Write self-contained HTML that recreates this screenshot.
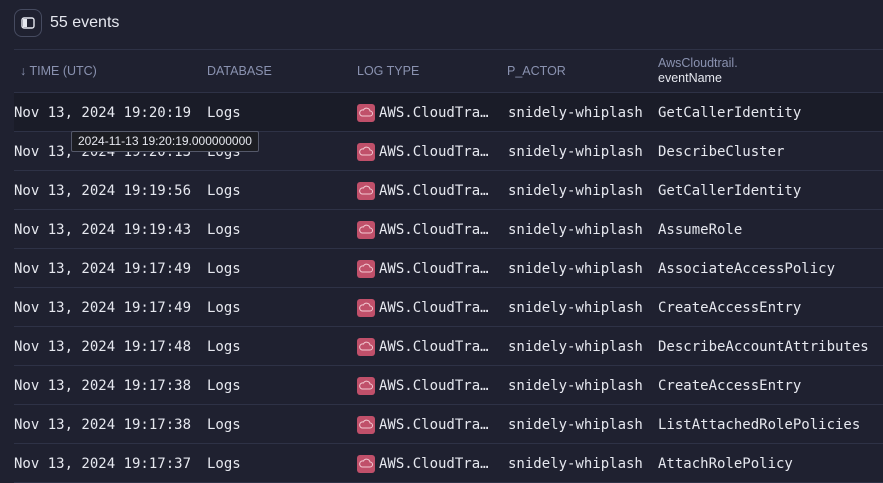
<!DOCTYPE html>
<html><head><style>
body{margin:0;width:883px;height:482px;background:#1f2130;overflow:hidden;font-family:"Liberation Sans",sans-serif;color:#e6e8ef;position:relative}
.btn{position:absolute;left:14px;top:9px;width:28px;height:28px;border:1px solid #464b60;border-radius:8px;box-sizing:border-box}
.btn svg{position:absolute;left:6px;top:6px}
.title{position:absolute;left:50px;top:14px;font-size:16px;color:#e6e8ef}
.hl{position:absolute;left:14px;right:0;height:1px;background:#2e3246}
.hd{position:absolute;top:64px;font-size:12.5px;color:#8a92b0}
.row{position:absolute;left:14px;right:0;height:38px;border-bottom:1px solid #2e3246;font-family:"DejaVu Sans Mono",monospace;font-size:14px;color:#e6e8ef}
.row span{position:absolute;top:12px;white-space:nowrap}
.ic{position:absolute;left:343px;top:11px;width:18px;height:18px;background:#c0506a;border-radius:3px}
.ic svg{position:absolute;left:2px;top:3px}
.tip{position:absolute;left:71px;top:131px;height:19px;padding:0 6px;background:#1c1d22;border:1px solid #55596a;border-radius:2px;font-size:12px;line-height:19px;color:#e6e8ef}
</style></head><body>
<div class="btn"><svg width="14" height="14" viewBox="0 0 14 14"><rect x="1" y="2" width="12" height="10" rx="2" fill="none" stroke="#e6e8ef" stroke-width="1.4"/><rect x="2" y="3" width="4" height="8" fill="#e6e8ef"/></svg></div>
<div class="title">55 events</div>
<div class="hl" style="top:49px"></div>
<div class="hd" style="left:20px">↓ TIME (UTC)</div>
<div class="hd" style="left:207px">DATABASE</div>
<div class="hd" style="left:357px">LOG TYPE</div>
<div class="hd" style="left:507px">P_ACTOR</div>
<div class="hd" style="left:658px;top:56px;line-height:15px">AwsCloudtrail.<br><span style="color:#e6e8ef">eventName</span></div>
<div class="hl" style="top:92px"></div>
<div class="row" style="top:93px;background:#1a1c28"><span style="left:0">Nov 13, 2024 19:20:19</span><span style="left:193px">Logs</span><div class="ic"><svg width="14" height="11" viewBox="0 0 14 11"><path d="M3 9h8a2.5 2.5 0 0 0 0-5 3.5 3.5 0 0 0-6.5-1A3 3 0 0 0 3 9z" fill="none" stroke="#f3c9d2" stroke-width="1"/></svg></div><span style="left:365px">AWS.CloudTra…</span><span style="left:494px">snidely-whiplash</span><span style="left:644px">GetCallerIdentity</span></div>
<div class="row" style="top:132px"><span style="left:0">Nov 13, 2024 19:20:13</span><span style="left:193px">Logs</span><div class="ic"><svg width="14" height="11" viewBox="0 0 14 11"><path d="M3 9h8a2.5 2.5 0 0 0 0-5 3.5 3.5 0 0 0-6.5-1A3 3 0 0 0 3 9z" fill="none" stroke="#f3c9d2" stroke-width="1"/></svg></div><span style="left:365px">AWS.CloudTra…</span><span style="left:494px">snidely-whiplash</span><span style="left:644px">DescribeCluster</span></div>
<div class="row" style="top:171px"><span style="left:0">Nov 13, 2024 19:19:56</span><span style="left:193px">Logs</span><div class="ic"><svg width="14" height="11" viewBox="0 0 14 11"><path d="M3 9h8a2.5 2.5 0 0 0 0-5 3.5 3.5 0 0 0-6.5-1A3 3 0 0 0 3 9z" fill="none" stroke="#f3c9d2" stroke-width="1"/></svg></div><span style="left:365px">AWS.CloudTra…</span><span style="left:494px">snidely-whiplash</span><span style="left:644px">GetCallerIdentity</span></div>
<div class="row" style="top:210px"><span style="left:0">Nov 13, 2024 19:19:43</span><span style="left:193px">Logs</span><div class="ic"><svg width="14" height="11" viewBox="0 0 14 11"><path d="M3 9h8a2.5 2.5 0 0 0 0-5 3.5 3.5 0 0 0-6.5-1A3 3 0 0 0 3 9z" fill="none" stroke="#f3c9d2" stroke-width="1"/></svg></div><span style="left:365px">AWS.CloudTra…</span><span style="left:494px">snidely-whiplash</span><span style="left:644px">AssumeRole</span></div>
<div class="row" style="top:249px"><span style="left:0">Nov 13, 2024 19:17:49</span><span style="left:193px">Logs</span><div class="ic"><svg width="14" height="11" viewBox="0 0 14 11"><path d="M3 9h8a2.5 2.5 0 0 0 0-5 3.5 3.5 0 0 0-6.5-1A3 3 0 0 0 3 9z" fill="none" stroke="#f3c9d2" stroke-width="1"/></svg></div><span style="left:365px">AWS.CloudTra…</span><span style="left:494px">snidely-whiplash</span><span style="left:644px">AssociateAccessPolicy</span></div>
<div class="row" style="top:288px"><span style="left:0">Nov 13, 2024 19:17:49</span><span style="left:193px">Logs</span><div class="ic"><svg width="14" height="11" viewBox="0 0 14 11"><path d="M3 9h8a2.5 2.5 0 0 0 0-5 3.5 3.5 0 0 0-6.5-1A3 3 0 0 0 3 9z" fill="none" stroke="#f3c9d2" stroke-width="1"/></svg></div><span style="left:365px">AWS.CloudTra…</span><span style="left:494px">snidely-whiplash</span><span style="left:644px">CreateAccessEntry</span></div>
<div class="row" style="top:327px"><span style="left:0">Nov 13, 2024 19:17:48</span><span style="left:193px">Logs</span><div class="ic"><svg width="14" height="11" viewBox="0 0 14 11"><path d="M3 9h8a2.5 2.5 0 0 0 0-5 3.5 3.5 0 0 0-6.5-1A3 3 0 0 0 3 9z" fill="none" stroke="#f3c9d2" stroke-width="1"/></svg></div><span style="left:365px">AWS.CloudTra…</span><span style="left:494px">snidely-whiplash</span><span style="left:644px">DescribeAccountAttributes</span></div>
<div class="row" style="top:366px"><span style="left:0">Nov 13, 2024 19:17:38</span><span style="left:193px">Logs</span><div class="ic"><svg width="14" height="11" viewBox="0 0 14 11"><path d="M3 9h8a2.5 2.5 0 0 0 0-5 3.5 3.5 0 0 0-6.5-1A3 3 0 0 0 3 9z" fill="none" stroke="#f3c9d2" stroke-width="1"/></svg></div><span style="left:365px">AWS.CloudTra…</span><span style="left:494px">snidely-whiplash</span><span style="left:644px">CreateAccessEntry</span></div>
<div class="row" style="top:405px"><span style="left:0">Nov 13, 2024 19:17:38</span><span style="left:193px">Logs</span><div class="ic"><svg width="14" height="11" viewBox="0 0 14 11"><path d="M3 9h8a2.5 2.5 0 0 0 0-5 3.5 3.5 0 0 0-6.5-1A3 3 0 0 0 3 9z" fill="none" stroke="#f3c9d2" stroke-width="1"/></svg></div><span style="left:365px">AWS.CloudTra…</span><span style="left:494px">snidely-whiplash</span><span style="left:644px">ListAttachedRolePolicies</span></div>
<div class="row" style="top:444px"><span style="left:0">Nov 13, 2024 19:17:37</span><span style="left:193px">Logs</span><div class="ic"><svg width="14" height="11" viewBox="0 0 14 11"><path d="M3 9h8a2.5 2.5 0 0 0 0-5 3.5 3.5 0 0 0-6.5-1A3 3 0 0 0 3 9z" fill="none" stroke="#f3c9d2" stroke-width="1"/></svg></div><span style="left:365px">AWS.CloudTra…</span><span style="left:494px">snidely-whiplash</span><span style="left:644px">AttachRolePolicy</span></div>
<div class="tip">2024-11-13 19:20:19.000000000</div>
</body></html>
